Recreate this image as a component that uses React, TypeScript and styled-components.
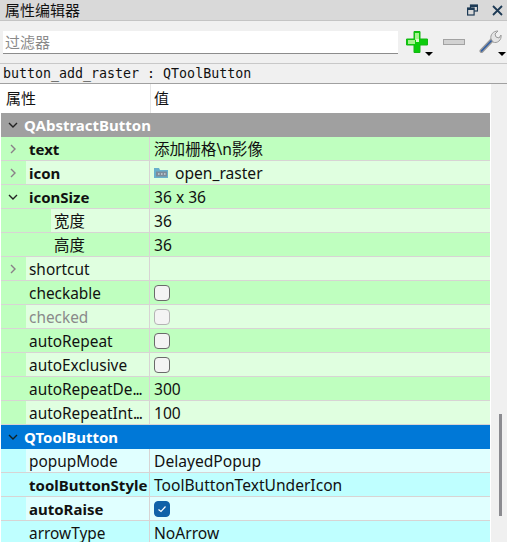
import React from "react";
import styled, { createGlobalStyle } from "styled-components";

const Global = createGlobalStyle`
  html, body { margin: 0; padding: 0; width: 507px; height: 542px; overflow: hidden; background: #f0f0f0; }
  * { box-sizing: border-box; }
`;

const Panel = styled.div`
  width: 507px; height: 542px; overflow: hidden; display: flex; flex-direction: column;
  font-family: "Noto Sans", "Noto Sans CJK SC", sans-serif; font-size: 15.4px; color: #111; background: #f0f0f0;
`;
const TitleBar = styled.div`
  height: 21px; flex: none; background: #d9d9d9; border-bottom: 1px solid #c4c4c4;
  display: flex; align-items: center; justify-content: space-between; padding: 0 4px 0 5px;
`;
const TitleText = styled.span`font-size: 15px; line-height: 20px;`;
const TitleButtons = styled.div`display: flex; align-items: center; gap: 14px;`;
const Toolbar = styled.div`
  height: 43px; flex: none; display: flex; align-items: center; padding: 0 0 0 3px;
  border-bottom: 1px solid #c8c8c8; background: #f0f0f0;
`;
const Filter = styled.div`
  width: 395px; height: 23px; background: #fff; border-bottom: 1px solid #8c8c8c;
  color: #8a8a8a; font-size: 15px; line-height: 22px; padding-left: 2px;
`;
const ToolIcons = styled.div`display: flex; align-items: center; gap: 13px; margin-left: 8px;`;
const ToolIcon = styled.div<{ $w: number }>`
  position: relative; width: ${(p) => p.$w}px; height: 24px; display: flex; align-items: center;
`;
const DropArrow = styled.span`
  position: absolute; right: -3px; bottom: -2px; width: 0; height: 0;
  border-left: 4px solid transparent; border-right: 4px solid transparent; border-top: 4px solid #000;
`;
const ObjectLabel = styled.div`
  height: 20px; flex: none; font-family: "DejaVu Sans Mono", monospace; font-size: 13.3px; line-height: 19px;
  padding-left: 3px; color: #111; border-bottom: 1px solid #a0a0a0; white-space: pre;
`;
const Body = styled.div`flex: 1; display: flex; min-height: 0;`;
const Tree = styled.div`width: 491px; flex: none; background: #fff; padding: 0 1px; overflow: hidden;`;
const Header = styled.div`
  height: 29px; display: grid; grid-template-columns: 149px 1fr; background: #fff; line-height: 29px; font-size: 15px;
`;
const HeaderCell = styled.div`padding-left: 5px; & + & { border-left: 1px solid #e5e5e5; padding-left: 3px; }`;
const Section = styled.div<{ $bg: string }>`
  height: 24px; background: ${(p) => p.$bg}; display: flex; align-items: center;
  color: #fff; font-weight: 700; font-size: 15px; border-bottom: 1px solid ${(p) => p.$bg};
`;
const Arrow = styled.span`width: 23px; flex: none; display: flex; justify-content: center;`;
const Row = styled.div<{ $bg: string }>`
  position: relative; height: 24px; display: grid; grid-template-columns: 149px 1fr; background: ${(p) => p.$bg};
  border-bottom: 1px solid #d8d4d4;
`;
const NameCell = styled.div<{ $edge: string; $indent: number }>`
  display: flex; align-items: center; white-space: nowrap; overflow: hidden;
  background: linear-gradient(to right, ${(p) => p.$edge} ${(p) => p.$indent}px, transparent ${(p) => p.$indent}px);
  padding-left: ${(p) => p.$indent + 3}px; border-right: 1px solid #d8d4d4;
`;
const Branch = styled.span`position: absolute; left: 6px; display: flex; align-items: center;`;
const Name = styled.span<{ $bold?: boolean; $off?: boolean; $nudge?: boolean }>`
  font-weight: ${(p) => (p.$bold ? 700 : 400)}; font-size: ${(p) => (p.$bold ? 15 : 15.4)}px;
  color: ${(p) => (p.$off ? "#8a8a8a" : "#111")};
  padding-top: ${(p) => (p.$nudge ? 2 : 0)}px;
`;
const Dots = styled.span`letter-spacing: -1.2px;`;
const ValueCell = styled.div`display: flex; align-items: center; padding-left: 4px; white-space: nowrap; gap: 7px; font-size: 15.6px;`;
const Check = styled.span<{ $on?: boolean; $off?: boolean }>`
  width: 16px; height: 16px; border-radius: 4px; display: flex; align-items: center; justify-content: center;
  background: ${(p) => (p.$on ? "#0f62a8" : "#f4f4f4")};
  border: 1px solid ${(p) => (p.$on ? "#0f62a8" : p.$off ? "#b4b4b4" : "#6a6a6a")};
`;
const Scrollbar = styled.div`position: relative; width: 16px; flex: none; background: #f0f0f0;`;
const Thumb = styled.div`position: absolute; left: 8px; top: 330px; width: 3px; height: 102px; background: #8b8b90;`;

const Chev = ({ open, color = "#8a8088" }: { open?: boolean; color?: string }) => (
  <svg width="12" height="12" viewBox="0 0 12 12" fill="none" stroke={color} strokeWidth="1.4">
    {open ? <path d="M2 4l4 4 4-4" /> : <path d="M4 2l4 4-4 4" />}
  </svg>
);

const PlusIcon = () => (
  <svg width="22" height="22" viewBox="0 0 22 22">
    <path d="M8 .5h6v7.5h7.5v6H14v7.5H8V14H.5V8H8z" fill="#0ccc0c" stroke="#14b814" />
    <path d="M9 2h4v7h-4zM2 9h7v4H2z" fill="#a4f28e" />
    <path d="M10 8h3v3h-3z" fill="#dcfad0" />
  </svg>
);
const MinusIcon = () => (
  <svg width="23" height="7" viewBox="0 0 23 7">
    <rect x="0.5" y="0.5" width="21" height="5" fill="#d2d2d2" stroke="#a2a2a2" />
  </svg>
);
const WrenchIcon = () => (
  <svg width="23" height="24" viewBox="0 0 23 24" fill="none">
    <path d="M2.5 21L14 9" stroke="#9a9a9a" strokeWidth="4" strokeLinecap="round" />
    <path d="M2.5 21L14 9" stroke="#2e5da6" strokeWidth="1.5" strokeLinecap="round" />
    <path d="M12 9c-1-4 2-8 7-8l-3 3 1 3 3 1 2-3c1 5-4 9-8 7z" fill="#e4e4e4" stroke="#9a9a9a" />
  </svg>
);
const FloatIcon = () => (
  <svg width="11" height="12" viewBox="0 0 11 12" fill="none" stroke="#1d3a55" strokeWidth="1.2">
    <rect x="3.5" y="1" width="7" height="6" />
    <rect x="0.6" y="4" width="6.5" height="7" fill="#d9d9d9" />
    <path d="M0.6 5h6.5M3.5 2h7" strokeWidth="2" />
  </svg>
);
const CloseIcon = () => (
  <svg width="11" height="11" viewBox="0 0 11 11" stroke="#1d3a55" strokeWidth="1.8"><path d="M1 1l9 9M10 1l-9 9" /></svg>
);
const FolderIcon = () => (
  <svg width="14" height="12" viewBox="0 0 14 12">
    <path d="M0 1h5l1 2h8v8H0z" fill="#68b0cc" />
    <rect x="2" y="4.5" width="11" height="5" fill="#7d8c9a" />
    <path d="M4 7h1.5M7 7h1.5M10 7h1.5" stroke="#f2f6f8" />
  </svg>
);
const Tick = () => (
  <svg width="10" height="10" viewBox="0 0 10 10" fill="none" stroke="#fff" strokeWidth="1.2"><path d="M1.5 5.5l2.5 2 4.5-5" /></svg>
);

type R = { name: React.ReactNode; bold?: boolean; off?: boolean; arrow?: "open" | "closed"; sub?: boolean; value?: React.ReactNode; dark: boolean };

const G1 = "#bfffbf", G2 = "#e0ffe0", C1 = "#bfffff", C2 = "#e0ffff";

const greenRows: R[] = [
  { name: "text", bold: true, arrow: "closed", value: "添加栅格\\n影像", dark: true },
  { name: "icon", bold: true, arrow: "closed", value: <><FolderIcon /><span>open_raster</span></>, dark: false },
  { name: "iconSize", bold: true, arrow: "open", value: "36 x 36", dark: true },
  { name: "宽度", sub: true, value: "36", dark: false },
  { name: "高度", sub: true, value: "36", dark: true },
  { name: "shortcut", arrow: "closed", value: "", dark: false },
  { name: "checkable", value: <Check />, dark: true },
  { name: "checked", off: true, value: <Check $off />, dark: false },
  { name: "autoRepeat", value: <Check />, dark: true },
  { name: "autoExclusive", value: <Check />, dark: false },
  { name: <>autoRepeatDe<Dots>...</Dots></>, value: "300", dark: true },
  { name: <>autoRepeatInt<Dots>...</Dots></>, value: "100", dark: false },
];
const cyanRows: R[] = [
  { name: "popupMode", value: "DelayedPopup", dark: false },
  { name: "toolButtonStyle", bold: true, value: "ToolButtonTextUnderIcon", dark: true },
  { name: "autoRaise", bold: true, value: <Check $on><Tick /></Check>, dark: false },
  { name: "arrowType", value: "NoArrow", dark: true },
];

const PropRow = ({ r, d, l }: { r: R; d: string; l: string }) => {
  const indent = r.sub ? 50 : 25;
  return (
    <Row $bg={r.dark ? d : l}>
      <NameCell $edge={d} $indent={indent}>
        {r.arrow && <Branch><Chev open={r.arrow === "open"} color={r.arrow === "open" ? "#222" : "#8a8088"} /></Branch>}
        <Name $bold={r.bold} $off={r.off} $nudge={!r.bold && !r.sub}>{r.name}</Name>
      </NameCell>
      <ValueCell>{r.value}</ValueCell>
    </Row>
  );
};

export default function App() {
  return (
    <Panel>
      <Global />
      <TitleBar>
        <TitleText>属性编辑器</TitleText>
        <TitleButtons><FloatIcon /><CloseIcon /></TitleButtons>
      </TitleBar>
      <Toolbar>
        <Filter>过滤器</Filter>
        <ToolIcons>
          <ToolIcon $w={24}><PlusIcon /><DropArrow /></ToolIcon>
          <ToolIcon $w={23}><MinusIcon /></ToolIcon>
          <ToolIcon $w={24}><WrenchIcon /><DropArrow /></ToolIcon>
        </ToolIcons>
      </Toolbar>
      <ObjectLabel>button_add_raster : QToolButton</ObjectLabel>
      <Body>
        <Tree>
          <Header><HeaderCell>属性</HeaderCell><HeaderCell>值</HeaderCell></Header>
          <Section $bg="#a0a0a0"><Arrow><Chev open color="#222" /></Arrow>QAbstractButton</Section>
          {greenRows.map((r, i) => <PropRow key={i} r={r} d={G1} l={G2} />)}
          <Section $bg="#0078d7"><Arrow><Chev open color="#122" /></Arrow>QToolButton</Section>
          {cyanRows.map((r, i) => <PropRow key={i} r={r} d={C1} l={C2} />)}
        </Tree>
        <Scrollbar><Thumb /></Scrollbar>
      </Body>
    </Panel>
  );
}
